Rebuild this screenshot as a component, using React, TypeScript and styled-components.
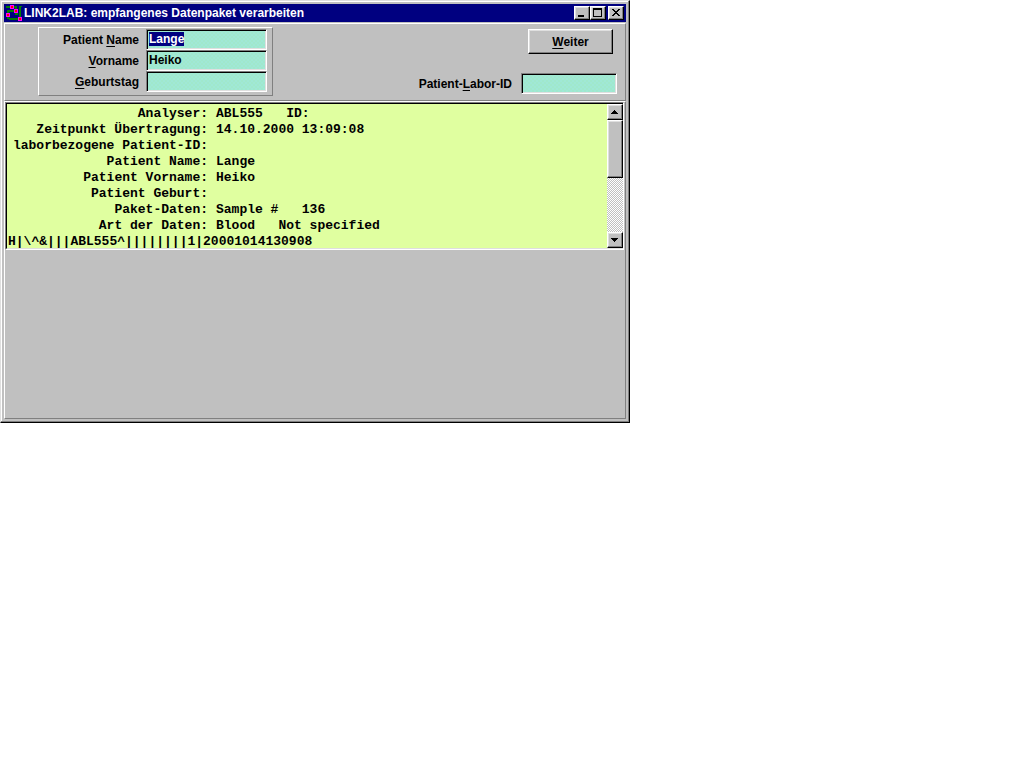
import React, { useEffect, useRef } from "react";
import styled, { createGlobalStyle, css } from "styled-components";

const face = "#c0c0c0";
const shade = "#808080";
const light = "#dfdfdf";
const navy = "#000080";

const GlobalStyle = createGlobalStyle`
  * { box-sizing: border-box; }
  body {
    margin: 0;
    background: #fff;
    color: #000;
    font: bold 12px/16px "Liberation Sans", Arial, sans-serif;
  }
  u { text-underline-offset: 2px; }
`;

const raised = css`
  border: 1px solid;
  border-color: #fff #000 #000 #fff;
  box-shadow: inset -1px -1px ${shade}, inset 1px 1px ${light};
  background: ${face};
`;

const Window = styled.main`
  width: 100%;
  max-width: 630px;
  padding: 3px;
  border: 1px solid;
  border-color: ${light} #000 #000 ${light};
  box-shadow: inset -1px -1px ${shade}, inset 1px 1px #fff;
  background: ${face};
`;

const TitleBar = styled.header`
  display: flex;
  align-items: center;
  height: 18px;
  margin-bottom: 1px;
  padding: 0 2px;
  background: ${navy};
  color: #fff;
`;

const Title = styled.h1`
  flex: 1;
  min-width: 0;
  margin: 0 0 0 2px;
  overflow: hidden;
  font: inherit;
  white-space: nowrap;
`;

const CaptionButton = styled.button<{ $apart?: boolean }>`
  ${raised}
  flex: none;
  width: 16px;
  height: 14px;
  margin-left: ${(p) => (p.$apart ? 2 : 0)}px;
  padding: 0;
  svg { display: block; }
`;

const Panel = styled.section`
  border: 1px solid;
  border-color: #fff ${shade} ${shade} #fff;
`;

const FormPanel = styled(Panel)`
  display: flex;
  justify-content: space-between;
  align-items: flex-start;
  padding: 3px 8px 4px 33px;
`;

const DataPanel = styled(Panel)`
  min-height: 318px;
  padding-right: 1px;
`;

const Group = styled.div`
  display: grid;
  grid-template-columns: 100px 121px;
  column-gap: 7px;
  align-items: center;
  padding: 1px 5px 3px 0;
  border: 1px solid;
  border-color: #fff ${shade} ${shade} #fff;
`;

const Label = styled.label`
  text-align: right;
  white-space: nowrap;
`;

const Field = styled.input`
  width: 100%;
  height: 21px;
  padding: 0 0 1px 2px;
  border: 1px solid;
  border-color: ${shade} #fff #fff ${shade};
  border-radius: 0;
  outline: none;
  box-shadow: inset 1px 1px #000, inset -1px -1px ${light};
  background: repeating-conic-gradient(#a0e8cc 0 25%, #a0e8d6 0 50%) 0 0 / 4px 4px;
  color: #000;
  font: inherit;
  &::selection { background: ${navy}; color: #fff; }
`;

const Actions = styled.div`
  display: flex;
  flex-direction: column;
  align-items: flex-end;
  gap: 19px;
  padding-top: 2px;
`;

const PushButton = styled.button`
  ${raised}
  width: 85px;
  height: 25px;
  margin-right: 4px;
  padding: 0;
  color: #000;
  font: inherit;
`;

const IdRow = styled.div`
  display: grid;
  grid-template-columns: auto 96px;
  column-gap: 9px;
  align-items: center;
`;

const Viewer = styled.div`
  height: 148px;
  border: 1px solid;
  border-color: ${shade} #fff #fff ${shade};
`;

const ViewerInner = styled.div`
  display: flex;
  height: 100%;
  border: 1px solid;
  border-color: #000 ${light} ${light} #000;
  border-right: 0;
`;

const Report = styled.div`
  flex: 1;
  min-width: 0;
  overflow: hidden;
  padding: 2px 1px 0;
  background: #e0ffa0;
  font: bold 13px/16px "Liberation Mono", "Courier New", monospace;
  white-space: pre;
`;

const Entries = styled.dl`
  display: grid;
  grid-template-columns: 200px 1fr;
  grid-auto-rows: 16px;
  column-gap: 8px;
  margin: 0;
`;

const Key = styled.dt`
  text-align: right;
`;

const Value = styled.dd`
  margin: 0;
`;

const Record = styled.p`
  margin: 0;
`;

const ScrollBar = styled.div`
  display: flex;
  flex-direction: column;
  flex: none;
  width: 16px;
  background: repeating-conic-gradient(#fff 0 25%, ${face} 0 50%) 0 0 / 2px 2px;
`;

const ScrollButton = styled.button`
  ${raised}
  flex: none;
  width: 16px;
  height: 16px;
  padding: 0;
  svg { display: block; }
`;

const Track = styled.div`
  flex: 1;
`;

const Thumb = styled.div`
  ${raised}
  height: 58px;
`;

const entries: [string, string][] = [
  ["Analyser:", "ABL555   ID:"],
  ["Zeitpunkt Übertragung:", "14.10.2000 13:09:08"],
  ["laborbezogene Patient-ID:", ""],
  ["Patient Name:", "Lange"],
  ["Patient Vorname:", "Heiko"],
  ["Patient Geburt:", ""],
  ["Paket-Daten:", "Sample #   136"],
  ["Art der Daten:", "Blood   Not specified"],
];

const AppIcon = () => (
  <svg width="16" height="16" viewBox="0 0 16 16" shapeRendering="crispEdges" aria-hidden="true">
    <path
      d="M0 1h5v2H0zM8 1h3v3H9V3H8zM1 5h8v2H3v1H1zM10 8h2v2H9V8zM1 12h2v1h9v2H3v-1H1zM13 1h3v1h-1v10h-2z"
      fill="#008000"
    />
    {[[4, 0], [8, 4], [0, 8], [12, 12]].map(([x, y]) => (
      <g key={x}>
        <rect x={x} y={y} width="4" height="4" fill="#ff00ff" />
        <rect x={x + 1} y={y + 1} width="2" height="2" fill="#ff0000" />
      </g>
    ))}
  </svg>
);

const Glyph = ({ d, h = 12 }: { d: string; h?: number }) => (
  <svg width="14" height={h} viewBox={`0 0 14 ${h}`} shapeRendering="crispEdges" aria-hidden="true">
    <path d={d} fill="#000" fillRule="evenodd" />
  </svg>
);

export default function App() {
  const nameField = useRef<HTMLInputElement>(null);

  useEffect(() => {
    nameField.current?.focus();
    nameField.current?.select();
  }, []);

  return (
    <>
      <GlobalStyle />
      <Window>
        <TitleBar>
          <AppIcon />
          <Title>LINK2LAB: empfangenes Datenpaket verarbeiten</Title>
          <CaptionButton type="button" aria-label="Minimieren">
            <Glyph d="M3 8h6v2h-6z" />
          </CaptionButton>
          <CaptionButton type="button" aria-label="Maximieren">
            <Glyph d="M2 1h9v9h-9zM3 3v6h7v-6z" />
          </CaptionButton>
          <CaptionButton type="button" aria-label="Schließen" $apart>
            <Glyph d="M3 2h2v1h1v1h2v-1h1v-1h2v1h-1v1h-1v1h-1v1h1v1h1v1h1v1h-2v-1h-1v-1h-2v1h-1v1h-2v-1h1v-1h1v-1h1v-1h-1v-1h-1v-1h-1z" />
          </CaptionButton>
        </TitleBar>

        <FormPanel>
          <Group>
            <Label htmlFor="name">Patient <u>N</u>ame</Label>
            <Field id="name" ref={nameField} defaultValue="Lange" />
            <Label htmlFor="vorname"><u>V</u>orname</Label>
            <Field id="vorname" defaultValue="Heiko" />
            <Label htmlFor="geburtstag"><u>G</u>eburtstag</Label>
            <Field id="geburtstag" />
          </Group>
          <Actions>
            <PushButton type="button"><u>W</u>eiter</PushButton>
            <IdRow>
              <Label htmlFor="labor-id">Patient-<u>L</u>abor-ID</Label>
              <Field id="labor-id" />
            </IdRow>
          </Actions>
        </FormPanel>

        <DataPanel>
          <Viewer>
            <ViewerInner>
              <Report>
                <Entries>
                  {entries.map(([key, value]) => (
                    <React.Fragment key={key}>
                      <Key>{key}</Key>
                      <Value>{value}</Value>
                    </React.Fragment>
                  ))}
                </Entries>
                <Record>{"H|\\^&|||ABL555^||||||||1|20001014130908"}</Record>
              </Report>
              <ScrollBar>
                <ScrollButton type="button" aria-label="Nach oben">
                  <Glyph h={14} d="M6 5h1v1h1v1h1v1h1v1h-7v-1h1v-1h1v-1h1z" />
                </ScrollButton>
                <Track><Thumb /></Track>
                <ScrollButton type="button" aria-label="Nach unten">
                  <Glyph h={14} d="M3 5h7v1h-1v1h-1v1h-1v1h-1v-1h-1v-1h-1v-1h-1z" />
                </ScrollButton>
              </ScrollBar>
            </ViewerInner>
          </Viewer>
        </DataPanel>
      </Window>
    </>
  );
}
